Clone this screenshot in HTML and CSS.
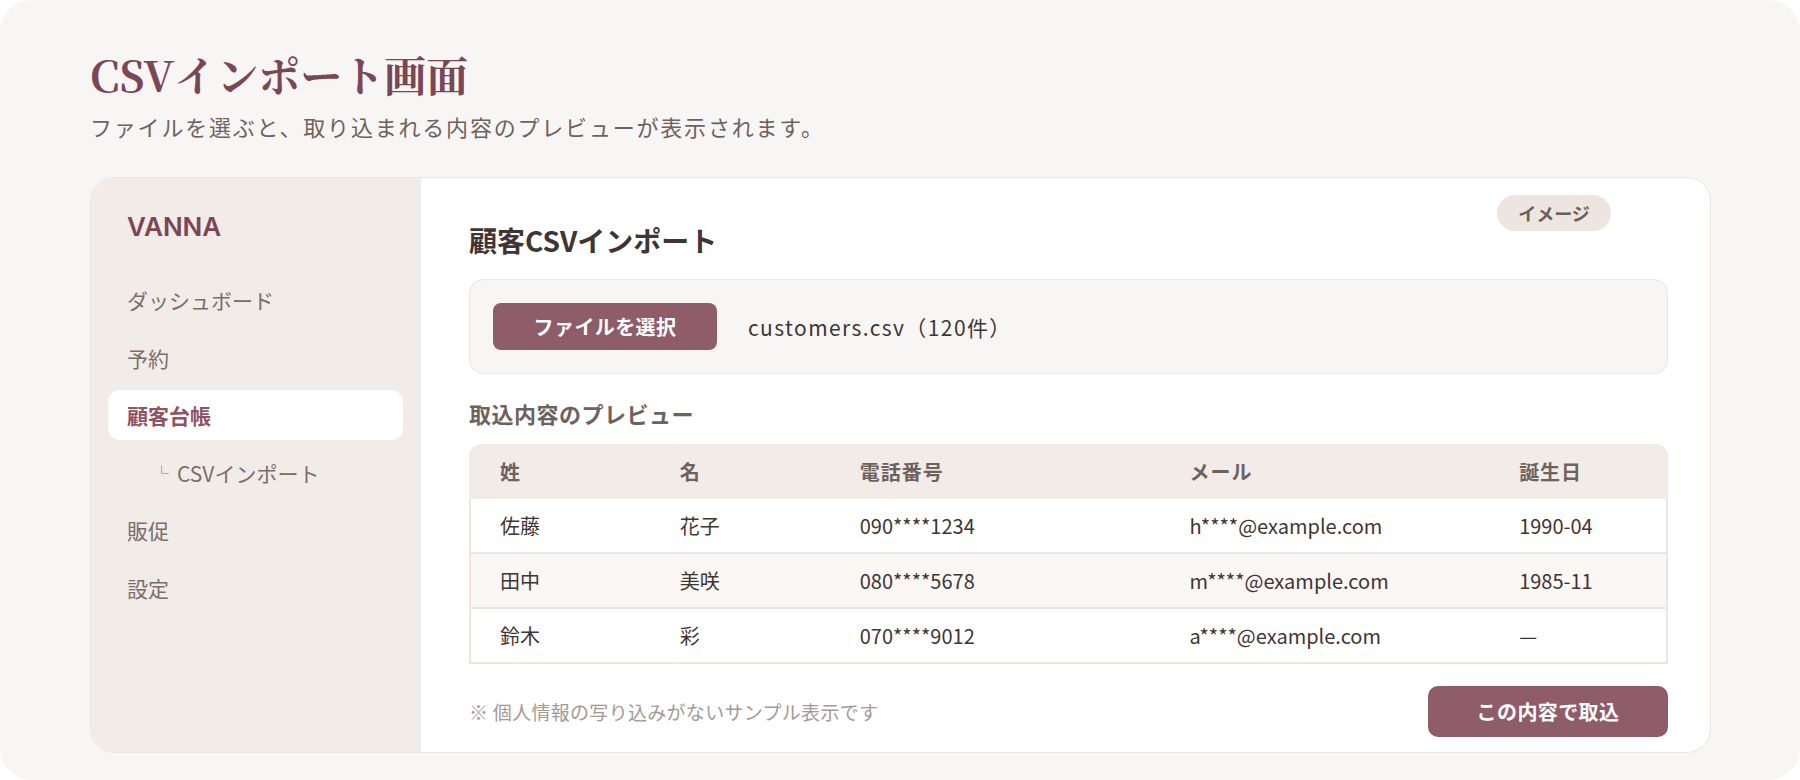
FILE: index.html
```html
<!DOCTYPE html>
<html lang="ja">
<head>
    <title>CSVインポート画面</title>
    <meta charset="UTF-8">
    <meta name="viewport" content="width=device-width, initial-scale=1.0">
    <link rel="stylesheet" href="styles.css">
</head>
<body>
    <div class="page">
        <h1 class="page-title">CSVインポート画面</h1>
        <p class="page-lead">ファイルを選ぶと、取り込まれる内容のプレビューが表示されます。</p>

        <div class="app-card">
            <aside class="sidebar">
                <div class="logo">VANNA</div>
                <nav class="nav">
                    <a class="nav-item">ダッシュボード</a>
                    <a class="nav-item">予約</a>
                    <a class="nav-item active">顧客台帳</a>
                    <a class="nav-item sub"><span class="sub-mark">└</span>CSVインポート</a>
                    <a class="nav-item">販促</a>
                    <a class="nav-item">設定</a>
                </nav>
            </aside>

            <main class="content">
                <span class="badge">イメージ</span>
                <h2 class="content-title">顧客CSVインポート</h2>

                <div class="file-box">
                    <button class="button">ファイルを選択</button>
                    <span class="file-name">customers.csv（120件）</span>
                </div>

                <h3 class="section-label">取込内容のプレビュー</h3>

                <table class="preview-table">
                    <thead>
                        <tr>
                            <th class="col-s">姓</th>
                            <th class="col-s">名</th>
                            <th class="col-l">電話番号</th>
                            <th class="col-l">メール</th>
                            <th class="col-s">誕生日</th>
                        </tr>
                    </thead>
                    <tbody>
                        <tr>
                            <td>佐藤</td>
                            <td>花子</td>
                            <td>090****1234</td>
                            <td>h****@example.com</td>
                            <td>1990-04</td>
                        </tr>
                        <tr>
                            <td>田中</td>
                            <td>美咲</td>
                            <td>080****5678</td>
                            <td>m****@example.com</td>
                            <td>1985-11</td>
                        </tr>
                        <tr>
                            <td>鈴木</td>
                            <td>彩</td>
                            <td>070****9012</td>
                            <td>a****@example.com</td>
                            <td>—</td>
                        </tr>
                    </tbody>
                </table>

                <div class="content-footer">
                    <p class="note">※ 個人情報の写り込みがないサンプル表示です</p>
                    <button class="button button-lg">この内容で取込</button>
                </div>
            </main>
        </div>
    </div>
</body>
</html>
```

FILE: styles.css
```css
/* CSV import mock */
:root {
    --maroon: #7b4656;
    --accent: #8f5c69;
    --side-bg: #f1ece8;
    --page-bg: #f8f6f4;
    --line: #ece5e0;
    --text: #3f3533;
    --muted: #6e625e;
    --sans: "Noto Sans CJK JP", "Noto Sans", sans-serif;
}

* { margin: 0; padding: 0; box-sizing: border-box; }

body {
    font-family: var(--sans);
    background: #ffffff;
    color: var(--text);
}

.page {
    min-height: 780px;
    background: var(--page-bg);
    border-radius: 32px;
    padding: 44px 89px 0 90px;
}

.page-title {
    font-family: "Noto Serif CJK JP", "Liberation Serif", serif;
    font-size: 42px;
    line-height: 60px;
    font-weight: 700;
    color: var(--maroon);
}

.page-lead {
    margin-top: 7px;
    font-size: 22px;
    line-height: 30px;
    letter-spacing: 1.8px;
    color: var(--muted);
}

.app-card {
    margin-top: 36px;
    height: 576px;
    display: grid;
    grid-template-columns: 330px 1fr;
    background: #ffffff;
    border: 1px solid var(--line);
    border-radius: 24px;
    overflow: hidden;
}

/* sidebar */
.sidebar {
    background: var(--side-bg);
    padding: 33px 18px 0 17px;
}

.logo {
    padding-left: 19px;
    font-family: Inter, "Noto Sans", sans-serif;
    font-size: 26px;
    line-height: 32px;
    font-weight: 600;
    color: var(--maroon);
}

.nav {
    margin-top: 32px;
    display: flex;
    flex-direction: column;
    gap: 7.5px;
}

.nav-item {
    display: flex;
    align-items: center;
    height: 50px;
    padding-left: 19px;
    border-radius: 12px;
    font-size: 21px;
    color: #7a6e6a;
}

.nav-item.active {
    background: #ffffff;
    color: #8f5363;
    font-weight: 700;
}

.nav-item.sub {
    padding-left: 46px;
}

.sub-mark {
    font-size: 15px;
    margin-right: 8px;
    color: #8a7e7a;
}

/* main area */
.content {
    position: relative;
    padding: 45px 42px 0 48px;
}

.badge {
    position: absolute;
    top: 17px;
    right: 99px;
    width: 114px;
    height: 36px;
    display: flex;
    align-items: center;
    justify-content: center;
    background: #ede5e0;
    border-radius: 18px;
    font-size: 18px;
    font-weight: 700;
    color: #6b5f5b;
}

.content-title {
    font-size: 28px;
    line-height: 34px;
    font-weight: 700;
    color: var(--text);
}

.file-box {
    margin-top: 22px;
    display: flex;
    align-items: center;
    gap: 31px;
    padding: 23px;
    background: var(--page-bg);
    border: 1px solid var(--line);
    border-radius: 14px;
}

.button {
    font-family: var(--sans);
    background: var(--accent);
    color: #ffffff;
    border: none;
    border-radius: 8px;
    width: 224px;
    height: 47px;
    font-size: 20px;
    letter-spacing: 0.4px;
    font-weight: 700;
    cursor: pointer;
}

.button-lg {
    width: 240px;
    height: 51px;
    border-radius: 10px;
}

.file-name {
    font-size: 21px;
    letter-spacing: 1.4px;
    color: var(--text);
}

.section-label {
    margin-top: 24px;
    font-size: 22px;
    line-height: 30px;
    letter-spacing: 0.5px;
    font-weight: 700;
    color: var(--muted);
}

/* table */
.preview-table {
    margin-top: 16px;
    width: 100%;
    border-collapse: separate;
    border-spacing: 0;
    table-layout: fixed;
}

.col-s { width: 15%; }
.col-l { width: 27.5%; }

.preview-table th {
    background: var(--side-bg);
    padding: 15px 31px;
    line-height: 25px;
    font-size: 20px;
    letter-spacing: 1px;
    font-weight: 700;
    text-align: left;
    color: var(--muted);
}

.preview-table th:first-child { border-top-left-radius: 12px; }
.preview-table th:last-child { border-top-right-radius: 12px; }

.preview-table td {
    padding: 14px 31px;
    line-height: 25px;
    font-size: 20px;
    color: var(--text);
    border-bottom: 2px solid var(--line);
}

.preview-table td:first-child { border-left: 2px solid var(--line); padding-left: 29px; }
.preview-table td:last-child { border-right: 2px solid var(--line); }

.preview-table tbody tr:nth-child(2) td { background: #faf7f5; }

.content-footer {
    margin-top: 22px;
    display: flex;
    justify-content: space-between;
    align-items: center;
}

.note {
    font-size: 19px;
    letter-spacing: 0.3px;
    color: #a39995;
}
```
